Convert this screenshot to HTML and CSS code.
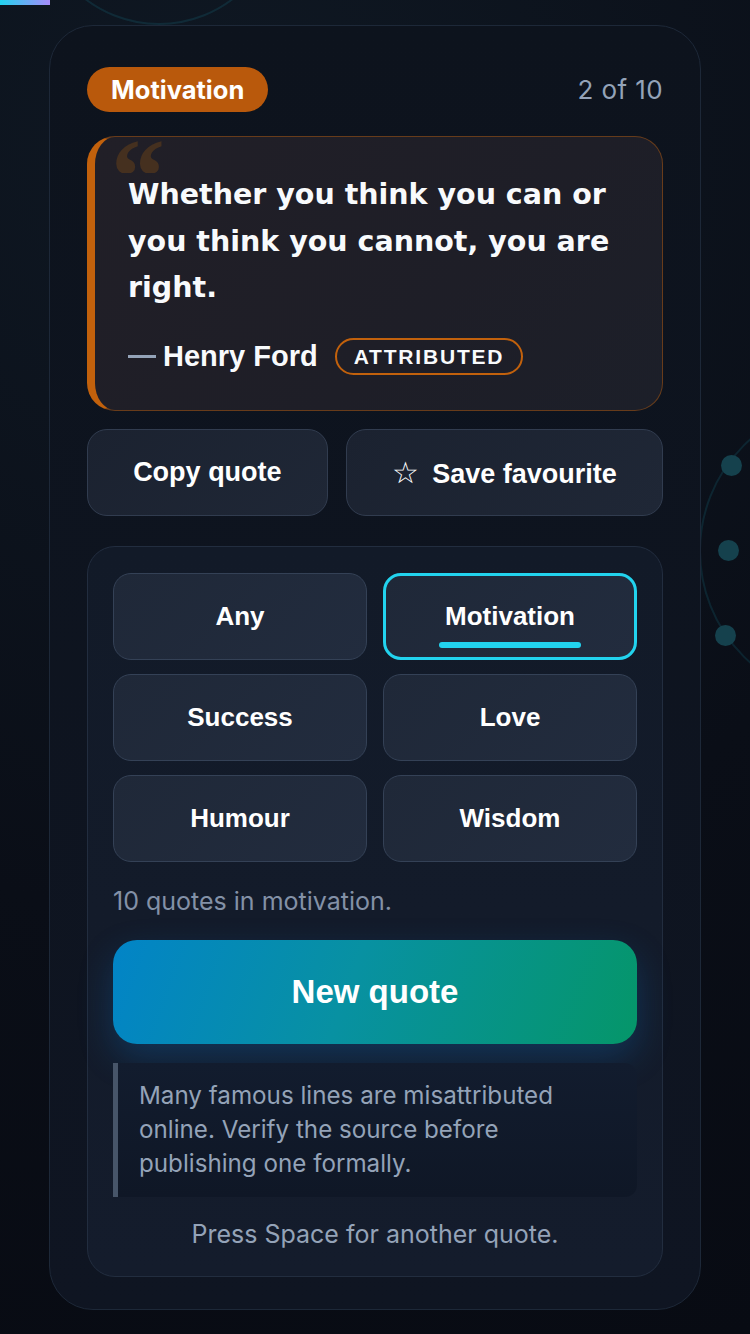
FILE: index.html
```html
<!DOCTYPE html>
<html lang="en">
<head>
  <meta charset="UTF-8" />
  <meta name="viewport" content="width=device-width, initial-scale=1.0"/>
  <title>Quote generator</title>
  <link rel="stylesheet" href="styles.css">
</head>
<body>
  <div class="backdrop">
    <div class="progress-bar"></div>
    <div class="deco deco-top"></div>
    <div class="deco deco-side"></div>
    <div class="deco-dots">
      <span></span>
      <span></span>
      <span></span>
    </div>
  </div>

  <main class="card">
    <div class="card-head">
      <span class="badge">Motivation</span>
      <span class="counter">2 of 10</span>
    </div>

    <figure class="quote">
      <blockquote>Whether you think you can or you think you cannot, you are right.</blockquote>
      <figcaption>
        <span class="dash"></span>
        <span class="author">Henry Ford</span>
        <span class="tag">Attributed</span>
      </figcaption>
    </figure>

    <div class="actions">
      <button class="btn">Copy quote</button>
      <button class="btn"><span class="star">&#9734;</span> Save favourite</button>
    </div>

    <section class="panel">
      <div class="cats">
        <button class="cat">Any</button>
        <button class="cat active">Motivation</button>
        <button class="cat">Success</button>
        <button class="cat">Love</button>
        <button class="cat">Humour</button>
        <button class="cat">Wisdom</button>
      </div>
      <p class="count">10 quotes in motivation.</p>
      <button class="new-quote">New quote</button>
      <p class="note">Many famous lines are misattributed online. Verify the source before publishing one formally.</p>
      <p class="hint">Press Space for another quote.</p>
    </section>
  </main>
</body>
</html>
```

FILE: styles.css
```css
* {
  box-sizing: border-box;
}
body {
  margin: 0;
  min-height: 1334px;
  font-family: Inter, "Noto Sans", sans-serif;
  background: radial-gradient(circle at 30% 10%, #0f1823 0%, #0a0e17 60%, #080b13 100%);
  color: #f8fafc;
  position: relative;
  overflow: hidden;
}
.backdrop {
  position: absolute;
  top: 0;
  left: 0;
  right: 0;
  bottom: 0;
  overflow: hidden;
}
.progress-bar {
  position: absolute;
  top: 0;
  left: 0;
  width: 50px;
  height: 5px;
  background: linear-gradient(90deg, #22d3ee, #a78bfa);
}
.deco {
  position: absolute;
  border-radius: 50%;
  border: 2px solid rgba(34, 211, 238, 0.11);
}
.deco-top {
  width: 244px;
  height: 244px;
  left: 37px;
  top: -219px;
}
.deco-side {
  width: 300px;
  height: 300px;
  left: 699px;
  top: 401px;
}
.deco-dots {
  position: absolute;
  left: 721px;
  top: 455px;
  display: flex;
  flex-direction: column;
  gap: 64px;
}
.deco-dots span {
  width: 21px;
  height: 21px;
  border-radius: 50%;
  background: #15414d;
}
.deco-dots span:nth-child(2) {
  margin-left: -3px;
}
.deco-dots span:nth-child(3) {
  margin-left: -6px;
}

.card {
  position: relative;
  width: 652px;
  height: 1285px;
  margin: 25px auto 0;
  padding: 41px 37px 0;
  border: 1.5px solid #1d2838;
  border-radius: 44px;
  background: linear-gradient(180deg, #0d131d 0%, #0f1522 100%);
}
.card-head {
  display: flex;
  justify-content: space-between;
  align-items: center;
  height: 45px;
}
.badge {
  background: #b9590c;
  color: #fff;
  font-weight: 700;
  font-size: 25.5px;
  padding: 0 24px;
  height: 45px;
  line-height: 45px;
  border-radius: 23px;
}
.counter {
  color: #94a3b8;
  font-size: 26px;
  letter-spacing: 0.4px;
}

.quote {
  position: relative;
  margin: 24px 0 0;
  padding: 35px 34px 35px 33px;
  border: 1.5px solid rgba(194, 97, 12, 0.45);
  border-left: 8px solid #c2610c;
  border-radius: 28px;
  background: linear-gradient(135deg, #211f27 0%, #1e1e27 60%, #1c1f29 100%);
}
.quote::before {
  content: "\201C";
  position: absolute;
  top: -14px;
  left: 16px;
  height: 50px;
  overflow: hidden;
  font-family: "Liberation Serif", serif;
  font-weight: 700;
  font-size: 108px;
  line-height: 1;
  color: #45301f;
}
.quote blockquote {
  position: relative;
  margin: 0;
  font-family: "DejaVu Sans", sans-serif;
  font-size: 28.5px;
  font-weight: 700;
  line-height: 46.5px;
}
.quote figcaption {
  display: flex;
  align-items: center;
  margin-top: 26px;
}
.dash {
  width: 28px;
  height: 3px;
  background: #94a3b8;
  margin-right: 7px;
}
.author {
  font-family: "Liberation Sans", Arial, sans-serif;
  font-weight: 700;
  font-size: 29px;
}
.tag {
  margin-left: 17px;
  height: 37px;
  line-height: 33px;
  padding: 0 17px;
  border: 2px solid #c2610c;
  border-radius: 19px;
  font-family: "Liberation Sans", Arial, sans-serif;
  font-weight: 700;
  font-size: 21px;
  letter-spacing: 1.8px;
  text-transform: uppercase;
}

.actions {
  display: flex;
  gap: 18px;
  margin-top: 18px;
}
.btn {
  flex: 1 1 auto;
  height: 87px;
  padding: 0 42px;
  border: 1.5px solid #313c4f;
  border-radius: 20px;
  background: linear-gradient(135deg, #1b2230, #1f2736);
  color: #fff;
  font-family: "Liberation Sans", Arial, sans-serif;
  font-weight: 700;
  font-size: 27px;
}
.star {
  font-family: "DejaVu Sans", sans-serif;
  font-weight: 400;
  font-size: 30px;
  margin-right: 6px;
}

.panel {
  margin-top: 30px;
  padding: 26px 25px 0;
  height: 731px;
  border: 1.5px solid #222d3f;
  border-radius: 28px;
  background: linear-gradient(180deg, #121a28 0%, #141c2c 100%);
}
.cats {
  display: grid;
  grid-template-columns: 1fr 1fr;
  gap: 14px 16px;
}
.cat {
  position: relative;
  height: 87px;
  border: 1.5px solid #344156;
  border-radius: 18px;
  background: linear-gradient(135deg, #1f2838, #222c3e);
  color: #fff;
  font-family: "Liberation Sans", Arial, sans-serif;
  font-weight: 700;
  font-size: 26px;
}
.cat.active {
  border: 3px solid #22d3ee;
}
.cat.active::after {
  content: "";
  position: absolute;
  left: 50%;
  bottom: 9px;
  width: 142px;
  height: 6px;
  margin-left: -71px;
  border-radius: 3px;
  background: #22d3ee;
}
.count {
  margin: 24px 0 0;
  color: #8391a7;
  font-size: 25px;
  line-height: 30px;
}
.new-quote {
  display: block;
  width: 100%;
  height: 104px;
  margin-top: 24px;
  border: none;
  border-radius: 24px;
  background: linear-gradient(110deg, #0284c7 0%, #0891a2 45%, #059669 100%);
  box-shadow: 0 14px 34px rgba(14, 116, 200, 0.28);
  color: #fff;
  font-family: "Liberation Sans", Arial, sans-serif;
  font-weight: 700;
  font-size: 33px;
}
.note {
  margin: 19px 0 0;
  padding: 16px 30px 16px 21px;
  border-left: 5px solid #475569;
  border-radius: 0 12px 12px 0;
  background: linear-gradient(180deg, #121c2e 0%, #0f1726 100%);
  color: #94a3b8;
  font-size: 24.2px;
  line-height: 34px;
}
.hint {
  margin: 22px 0 0;
  text-align: center;
  color: #94a3b8;
  font-size: 25px;
}
```
